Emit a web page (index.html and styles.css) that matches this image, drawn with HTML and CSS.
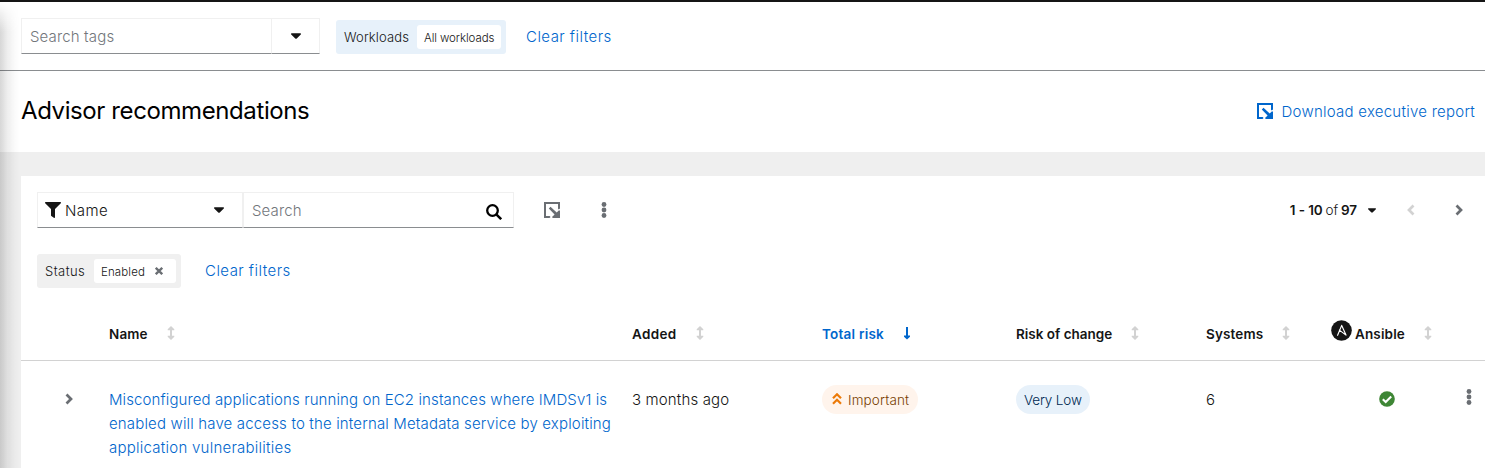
FILE: index.html
```html
<!DOCTYPE html>
<html lang="en">
<head>
<meta charset="utf-8">
<title>Advisor recommendations</title>
<link rel="stylesheet" href="styles.css">
</head>
<body>
<svg class="sprite" width="0" height="0" aria-hidden="true">
  <symbol id="caret" viewBox="0 0 10 6"><path d="M.7.3h8.6c.7 0 .9.7.5 1.1L6 5.2a1.4 1.4 0 0 1-2 0L.2 1.400C-.2 1 0 .3.7.3z"/></symbol>
  <symbol id="export" viewBox="0 0 16 16"><path d="M0 0h16v6.500L14.800 7.500 14 6.700V2H2v12h3.700l.9.900L5.500 16H0z"/><path d="M4.800 6.500 6.500 4.800 12.700 10.500 15 8.300l1 .5V16H8.800l-.8-1 2.600-2.600z"/></symbol>
  <symbol id="kebab" viewBox="0 0 6 16"><circle cx="3" cy="2.500" r="2.400"/><circle cx="3" cy="8" r="2.400"/><circle cx="3" cy="13.500" r="2.400"/></symbol>
  <symbol id="angle" viewBox="0 0 8 12"><path d="M1.500 1.500 6 6l-4.500 4.500" fill="none" stroke="currentColor" stroke-width="2.700"/></symbol>
  <symbol id="sort" viewBox="0 0 8 14"><path d="M4 0 7.300 3.200v1H5v5.600h2.300v1L4 14 .7 10.800v-1H3V4.200H.7v-1z"/></symbol>
</svg>
<div class="page">
  <section class="tagbar">
    <div class="tagselect">
      <div class="field tagselect-input"><span class="placeholder t-searchtags">Search tags</span></div>
      <div class="field tagselect-toggle"><svg class="caret"><use href="#caret"/></svg></div>
    </div>
    <div class="chipgroup chipgroup-blue"><span class="chip-label t-workloads">Workloads</span><span class="chip"><span class="t-allwork">All workloads</span></span></div>
    <a class="link clear t-clear">Clear filters</a>
  </section>
  <header class="heading">
    <h1 class="title">Advisor recommendations</h1>
    <a class="link download"><svg class="export"><use href="#export"/></svg><span class="t-download">Download executive report</span></a>
  </header>
  <main class="main">
    <div class="card">
      <div class="toolbar">
        <div class="field name-select">
          <svg class="funnel" viewBox="0 0 16 16"><path d="M.7 0h14.600c.7 0 1 .8.500 1.300L10 7.100v8.200c0 .6-.7.9-1.200.5L6.300 14a.8.8 0 0 1-.3-.6V7.100L.2 1.300C-.3.800 0 0 .7 0z"/></svg>
          <span class="t-nameopt">Name</span><svg class="caret"><use href="#caret"/></svg>
        </div>
        <div class="field search"><span class="placeholder t-search">Search</span>
          <svg class="magnifier" viewBox="0 0 16 16"><circle cx="6.500" cy="6.500" r="5.300" fill="none" stroke="#000" stroke-width="2.300"/><path d="m10.300 10.300 4.900 4.900" stroke="#000" stroke-width="2.500"/></svg>
        </div>
        <svg class="export toolbar-export"><use href="#export"/></svg>
        <svg class="kebab toolbar-kebab"><use href="#kebab"/></svg>
        <div class="pager">
          <span class="pager-text"><b>1 - 10</b><span class="of">of</span><b>97</b></span>
          <svg class="caret pager-caret" viewBox="0 0 10 6"><use href="#caret"/></svg>
          <svg class="angle prev"><use href="#angle"/></svg>
          <svg class="angle next"><use href="#angle"/></svg>
        </div>
      </div>
      <div class="filters">
        <div class="chipgroup"><span class="chip-label t-status">Status</span><span class="chip chip-enabled"><span class="t-enabled">Enabled</span><svg class="close" viewBox="0 0 8 8"><path d="m.8.8 6.400 6.400m0-6.400L.8 7.200" fill="none" stroke="#6a6e73" stroke-width="2.300"/></svg></span></div>
        <a class="link clear t-clear">Clear filters</a>
      </div>
      <div class="row thead">
        <span></span>
        <span class="th"><span class="h-name">Name</span><svg class="sort"><use href="#sort"/></svg></span>
        <span class="th"><span class="h-added">Added</span><svg class="sort"><use href="#sort"/></svg></span>
        <span class="th th-active"><span class="h-total">Total risk</span><svg class="sort sorted" viewBox="0 0 8 14"><path d="M3 1h2v8.500h2v1.300l-3 2.700-3-2.700V9.500h2z"/></svg></span>
        <span class="th"><span class="h-change">Risk of change</span><svg class="sort"><use href="#sort"/></svg></span>
        <span class="th"><span class="h-systems">Systems</span><svg class="sort"><use href="#sort"/></svg></span>
        <span class="th th-ansible"><svg class="ansible" viewBox="0 0 21 21"><circle cx="10.500" cy="10.500" r="10.300" fill="#151515"/><path d="m6.600 15.300 4.100-9.900 4.300 9.700-6.600-5" fill="none" stroke="#fff" stroke-width="1.150" stroke-linejoin="round" stroke-linecap="round"/></svg><span class="h-ansible">Ansible</span><svg class="sort"><use href="#sort"/></svg></span>
        <span></span>
      </div>
      <div class="row tbody">
        <span class="expand"><svg class="angle"><use href="#angle"/></svg></span>
        <a class="link rule"><span class="rule-1">Misconfigured applications running on EC2 instances where IMDSv1 is</span><span class="rule-2">enabled will have access to the internal Metadata service by exploiting</span><span class="rule-3">application vulnerabilities</span></a>
        <span class="t-ago">3 months ago</span>
        <span><span class="label label-orange"><svg class="double-up" viewBox="0 0 10 12"><path d="m1 5.300 4-4 4 4M1 10.800l4-4 4 4" fill="none" stroke="#ec7a08" stroke-width="2.200"/></svg><span class="t-important">Important</span></span></span>
        <span><span class="label label-blue"><span class="t-verylow">Very Low</span></span></span>
        <span>6</span>
        <span class="check"><svg width="16" height="16" viewBox="0 0 16 16"><circle cx="8" cy="8" r="7.800" fill="#3e8635"/><path d="m3.800 8.300 2.900 2.800 5.500-5.500" fill="none" stroke="#fff" stroke-width="2.100"/></svg></span>
        <span class="row-actions"><svg class="kebab"><use href="#kebab"/></svg></span>
      </div>
    </div>
  </main>
  <div class="nav-shadow"></div>
</div>
</body>
</html>
```
FILE: styles.css
```css
* { box-sizing: border-box; }
body { margin: 0; overflow: hidden; background: #fff; color: #151515; font: 300 15px/24px Inter, "Open Sans", sans-serif; letter-spacing: .14px; }
svg { display: block; flex: none; fill: currentColor; }
.sprite { position: absolute; }
.page { position: relative; height: 468px; border-top: 2px solid #151515; overflow: hidden; display: flex; flex-direction: column; }
.link { color: #06c; white-space: nowrap; }
.placeholder { color: #72767b; }
.caret { width: 10px; height: 6px; }
.export { width: 16px; height: 16px; }
.kebab { width: 6px; height: 16px; color: #6a6e73; }
.angle { width: 8px; height: 12px; color: #6a6e73; }

.tagbar { height: 69px; flex: none; border-bottom: 1px solid #8a8d90; padding: 16px 21px 0; display: flex; align-items: flex-start; }
.tagselect { display: flex; }
.field { height: 36px; border: 1px solid #f0f0f0; border-bottom-color: #8a8d90; display: flex; align-items: center; padding: 0 8px; }
.field > span { padding-top: 2px; }
.tagselect-input { width: 251px; }
.tagselect-toggle { width: 48px; border-left: 0; justify-content: center; }
.chipgroup { height: 34px; border-radius: 3px; background: #f0f0f0; display: flex; align-items: center; padding: 0 5px 0 8px; font-size: 13px; }
.tagbar .chipgroup { margin: 2px 0 0 16px; width: 170px; }
.chipgroup-blue { background: #e7f1fa; }
.chip-label { white-space: nowrap; flex: 1; }
.t-status { letter-spacing: .45px; }
.chip { height: 24px; width: 84px; border-radius: 3px; background: #fff; font-size: 11.500px; letter-spacing: 0; display: flex; align-items: center; padding: 2px 7px 0; white-space: nowrap; }
.tagbar .clear { margin: 7px 0 0 20px; }
.t-clear { letter-spacing: .46px; }
.t-allwork { letter-spacing: -.08px; }
.t-nameopt { letter-spacing: .4px; }
.t-enabled { letter-spacing: .12px; }

.heading { height: 81px; flex: none; padding: 0 10px 0 21px; display: flex; align-items: center; justify-content: space-between; }
.title { margin: 0 0 2px; color: #000; font-size: 24px; font-weight: 400; line-height: 31px; letter-spacing: -.4px; white-space: nowrap; }
.download { display: flex; align-items: center; gap: 9px; letter-spacing: .25px; }
.download .export { margin-top: -2px; }

.main { flex: 1; background: #efefef; padding: 24px 0 0 21px; }
.card { height: 100%; background: #fff; }
.toolbar { display: flex; align-items: center; padding: 16px 22px 0 16px; }
.name-select { width: 206px; padding-left: 7px; }
.funnel { width: 16px; height: 16px; margin-right: 4px; }
.name-select .caret { margin-left: auto; margin-right: 10px; }
.search { width: 271px; justify-content: space-between; }
.magnifier { width: 16px; height: 16px; margin: 3px 3px 0 0; }
.toolbar-export { color: #6a6e73; margin-left: 30px; }
.toolbar-kebab { margin-left: 41px; }
.pager { margin-left: auto; display: flex; align-items: center; }
.pager-text { display: flex; font-size: 13.500px; letter-spacing: -.1px; gap: 3px; }
.pager-text b { font-weight: 600; }
.pager-caret { width: 8px; height: 5px; margin: 0 1px 0 11px; }
.prev { margin-left: 30px; transform: scaleX(-1); color: #d2d2d2; }
.next { margin-left: 40px; }
.filters { display: flex; align-items: center; padding: 26px 16px 0; }
.filters .chipgroup { width: 144px; }
.chip-enabled { width: 82px; justify-content: space-between; padding-right: 13px; }
.close { width: 8px; height: 8px; margin-top: -2px; }
.filters .clear { margin-left: 24px; }

.row { display: grid; grid-template-columns: 88px 523px 190px 194px 190px 125px 129px 25px; }
.thead { height: 73px; border-bottom: 1px solid #d2d2d2; padding-top: 34px; font-size: 13.500px; font-weight: 600; }
.th { display: flex; height: 24px; align-items: center; white-space: nowrap; }
.th-active { color: #06c; }
.sort { width: 8px; height: 14px; margin: -2px 0 0 19px; color: #d2d2d2; }
.sorted { color: #06c; }
.h-change { letter-spacing: 0; }
.h-added { letter-spacing: .35px; }
.h-total { letter-spacing: .22px; }
.ansible { width: 21px; height: 21px; margin: -8px 3px 0 0; }
.tbody { padding-top: 27px; }
.expand { padding: 5px 0 0 44px; }
.rule { display: flex; flex-direction: column; }
.rule-1 { letter-spacing: .11px; }
.rule-2 { letter-spacing: .16px; }
.rule-3 { letter-spacing: .25px; }
.label { height: 29px; width: max-content; border-radius: 15px; display: flex; align-items: center; font-size: 13.500px; white-space: nowrap; margin-top: -3px; padding: 1px 8px 0; }
.label-orange { background: #fff4ec; color: #773d00; width: 96px; padding-left: 10px; gap: 6px; }
.label-blue { background: #e7f1fa; color: #002952; width: 74px; }
.t-verylow { letter-spacing: -.15px; }
.double-up { width: 10px; height: 12px; margin-top: -3px; }
.check { padding: 3px 0 0 48px; }
.row-actions { padding: 1px 0 0 6px; }
.nav-shadow { position: absolute; left: 0; top: 0; bottom: 0; width: 20px; background: linear-gradient(to right, rgba(3,3,3,.16), rgba(3,3,3,.07) 35%, rgba(3,3,3,.015) 75%, transparent); mask-image: linear-gradient(to bottom, transparent, #000 30px); }
```
